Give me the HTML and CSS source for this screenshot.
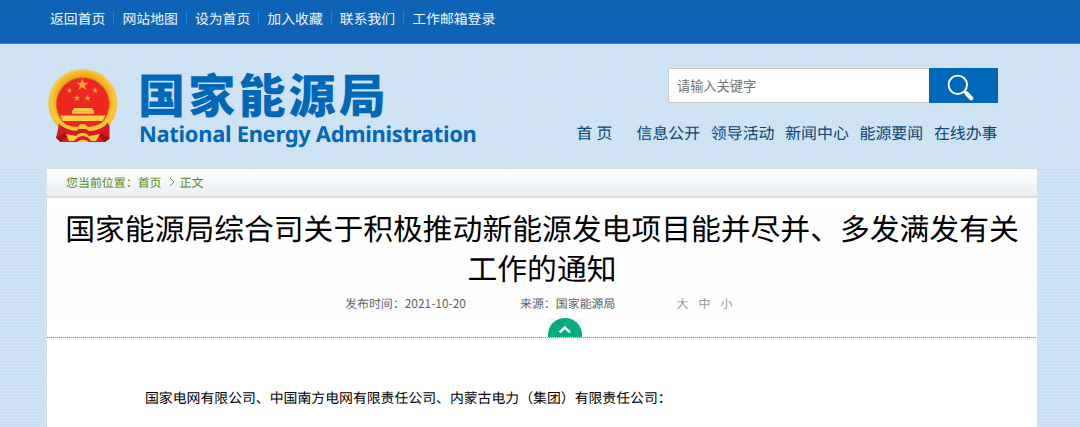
FILE: index.html
```html
<!DOCTYPE html>
<html lang="zh-CN">
<head>
	<meta charset="utf-8">
	<meta name="viewport" content="width=device-width, initial-scale=1">
	<title>国家能源局综合司关于积极推动新能源发电项目能并尽并、多发满发有关工作的通知</title>
	<link rel="stylesheet" href="styles.css">
</head>
<body>
<nav class="topbar">
	<a href="#">返回首页</a>
	<a href="#">网站地图</a>
	<a href="#">设为首页</a>
	<a href="#">加入收藏</a>
	<a href="#">联系我们</a>
	<a href="#">工作邮箱登录</a>
</nav>

<header class="header">
	<a class="logo" href="#">
		<svg class="emblem" viewBox="0 0 70 76" width="70" height="76">
			<defs>
				<radialGradient id="gold" cx="0.5" cy="0.47" r="0.54">
					<stop offset="0.7" stop-color="#f0a91c"></stop>
					<stop offset="0.86" stop-color="#fbcb3c"></stop>
					<stop offset="1" stop-color="#eeb02b"></stop>
				</radialGradient>
				<path id="star" d="M 0 -10 L 2.3 -3.1 L 9.5 -3.1 L 3.7 1.2 L 5.9 8.1 L 0 3.9 L -5.9 8.1 L -3.7 1.2 L -9.5 -3.1 L -2.3 -3.1 Z"></path>
			</defs>
			<!-- wreath -->
			<ellipse cx="34.8" cy="34.2" rx="34.5" ry="34.2" fill="url(#gold)"></ellipse>
			<circle cx="34.8" cy="35" r="27" fill="#c88619"></circle>
			<circle cx="34.8" cy="35.2" r="26.2" fill="#ed2722"></circle>
			<!-- stars -->
			<g fill="#e9a52f">
				<use href="#star" transform="translate(34.3 15.8) scale(0.65)"></use>
				<use href="#star" transform="translate(21.4 21.4) scale(0.33)"></use>
				<use href="#star" transform="translate(47.2 21.4) scale(0.33)"></use>
				<use href="#star" transform="translate(29 29.2) scale(0.35)"></use>
				<use href="#star" transform="translate(39.6 29.2) scale(0.35)"></use>
			</g>
			<!-- gate -->
			<path fill="#fccf45" d="M 25.5 39 h 19 v 2.2 h 1.5 v 3.6 h -22 v -3.6 h 1.5 z M 12 46.5 h 45.6 l -3 5.5 h -39.6 z"></path>
			<path stroke="#d99024" stroke-width="0.6" d="M 24 42.8 h 22"></path>
			<!-- ribbons -->
			<path fill="#d91a20" d="M 11 53 Q 22 58 29 60 L 41 60 Q 50 58 59 53 L 61.5 57 V 70 L 57 73 H 12.5 L 8 69 L 10 60 Z"></path>
			<path fill="#a90f18" d="M 8 68 L 17 64 L 20 67 L 12.5 73 Z M 61.5 69 L 53 64 L 50 67 L 57 73 Z"></path>
			<path fill="#f9c838" d="M 8 49 Q 18 58 30 58 Q 31 55 34.8 55 Q 38 55 40 58 Q 52 57 62 49 L 58 56 Q 50 62 41 62 L 38 60 H 31 L 28 62 Q 18 61 11 55 Z"></path>
			<path fill="#fccb3b" d="M 18 65 L 28 67 Q 30 64 34.8 64 Q 39 64 41 67 L 52 65 L 48 72 H 21 Z"></path>
			<path fill="#d91a20" d="M 25 73 Q 30 67 34.8 67 Q 40 67 44 73 Z"></path>
			<path fill="#fccb3b" d="M 29 73 Q 35 68 41 73 Z"></path>
		</svg>
		<span class="logo-text">
			<span class="logo-cn">国家能源局</span>
			<span class="logo-en">National Energy Administration</span>
		</span>
	</a>
	<div class="header-right">
		<form class="search">
			<input type="text" placeholder="请输入关键字">
			<button type="button" aria-label="搜索">
				<svg viewBox="0 0 28 28" width="28" height="28" fill="none" stroke="#fff">
					<circle cx="10.8" cy="10.8" r="9.2" stroke-width="1.9"></circle>
					<path d="M 17.2 17.2 l 2.6 2.6" stroke-width="2"></path>
					<path d="M 19.6 19.6 l 4.6 4.6" stroke-width="4.2" stroke-linecap="round"></path>
				</svg>
			</button>
		</form>
		<nav class="menu">
			<a class="home" href="#">首 页</a>
			<a href="#">信息公开</a>
			<a href="#">领导活动</a>
			<a href="#">新闻中心</a>
			<a href="#">能源要闻</a>
			<a href="#">在线办事</a>
		</nav>
	</div>
</header>

<main class="content">
	<div class="crumbs">
		<span>您当前位置：</span><a href="#">首页</a>
		<svg viewBox="0 0 6 10" width="6" height="10"><path d="M 1 1 L 5 5 L 1 9" fill="none" stroke="#6a9a2c"></path></svg>
		<a href="#">正文</a>
	</div>
	<div class="title-box">
		<h1>国家能源局综合司关于积极推动新能源发电项目能并尽并、多发满发有关<br>工作的通知</h1>
		<div class="info">
			<span class="date">发布时间：2021-10-20</span>
			<span class="source">来源：国家能源局</span>
			<span class="sizes"><a href="#">大</a><a href="#">中</a><a href="#">小</a></span>
		</div>
		<!-- collapse handle, sits on the dotted line -->
		<svg class="toggle" viewBox="0 0 34 19" width="34" height="19">
			<path fill="#05ac81" d="M 0 19 V 16.5 A 17 16.5 0 0 1 34 16.5 V 19 Z"></path>
			<path fill="none" stroke="#f4fffb" stroke-width="2.6" d="M 11.7 14.4 L 16.8 9.5 L 21.9 14.4"></path>
		</svg>
	</div>
	<div class="dots"></div>
	<article class="article">
		<p>国家电网有限公司、中国南方电网有限责任公司、内蒙古电力（集团）有限责任公司：</p>
	</article>
</main>
</body>
</html>
```

FILE: styles.css
```css
* {
  box-sizing: border-box;
  padding: 0;
  margin: 0;
}
body {
  height: 427px;
  overflow: hidden;
  font-family: "Noto Sans CJK SC", sans-serif;
  font-size: 12px;
  text-rendering: geometricPrecision;
  /* faint woven grid */
  background-color: #c8dff3;
  background-image:
    repeating-linear-gradient(90deg, rgba(255, 255, 255, 0.13) 0 1px, transparent 1px 3px),
    repeating-linear-gradient(rgba(255, 255, 255, 0.13) 0 1px, transparent 1px 3px);
}
a {
  color: inherit;
  text-decoration: none;
}

/* top bar */
.topbar {
  height: 44px;
  padding: 11px 0 0 50px;
  display: flex;
  align-items: flex-start;
  background: #0e63b6;
  border-bottom: 1px solid #3f86cb;
  color: #eef5fc;
  font-size: 13.87px;
  line-height: 14px;
}
.topbar a + a {
  margin-left: 8px;
  padding-left: 8px;
  border-left: 1px solid #0a88e4;
}

/* header */
.header {
  height: 124px;
  padding: 0 82px 0 48px;
  display: flex;
  justify-content: space-between;
  background: rgba(211, 228, 243, 0.4);
}
.logo {
  display: flex;
  padding-top: 25px;
  color: #0168b9;
}
.emblem {
  display: block;
}
.logo-text {
  display: flex;
  flex-direction: column;
  padding-left: 20px;
}
.logo-cn {
  margin-top: -3px;
  font-size: 47px;
  font-weight: 900;
  line-height: 54px;
  letter-spacing: 3.2px;
}
.logo-en {
  margin-top: 2px;
  padding-left: 1px;
  font-family: "Noto Sans", "Open Sans", sans-serif;
  font-size: 21.9px;
  font-weight: 700;
  line-height: 26px;
  letter-spacing: -0.28px;
  white-space: nowrap;
}
.header-right {
  padding-top: 24px;
  display: flex;
  flex-direction: column;
  align-items: flex-end;
}
.search {
  display: flex;
  height: 35px;
}
.search input {
  width: 261px;
  height: 35px;
  padding: 0 8px;
  border: 1px solid #ccc;
  border-right: 0;
  background: #fff;
  font-family: inherit;
  font-size: 13.2px;
  outline: 0;
}
.search input::placeholder {
  color: #757575;
}
.search button {
  width: 69px;
  height: 35px;
  padding: 4px 0 0 18px;
  border: 0;
  background: #0168b9;
}
.search button svg {
  display: block;
}
.menu {
  display: flex;
  gap: 10.8px;
  margin: 19px 0.5px 0 0;
  color: #0e4577;
  font-size: 15.9px;
  line-height: 22px;
}
.menu .home {
  margin-right: 13px;
  letter-spacing: 0.3px;
}

/* article */
.content {
  width: 992px;
  margin-left: 46px;
  background: #fff;
  border: 1px solid #d9dde0;
  border-bottom: 0;
}
.crumbs {
  height: 29px;
  padding: 0 0 1px 19px;
  display: flex;
  align-items: center;
  border-bottom: 2px solid #dadcde;
  background: linear-gradient(#fff, #eaeff3);
  color: #558b0c;
  font-size: 11.95px;
}
.crumbs svg {
  margin: 0 5px 0 7px;
}
.title-box {
  height: 139px;
  padding-top: 10px;
  display: flex;
  flex-direction: column;
  align-items: center;
  background: linear-gradient(#fff, #fdfdfd 110px, #fff 119px);
}
.title-box h1 {
  color: #000;
  font-size: 29.8px;
  font-weight: 400;
  line-height: 39.5px;
  text-align: center;
  white-space: nowrap;
}
.info {
  width: 100%;
  height: 31px;
  padding: 2px 0 0 298px;
  display: flex;
  color: #666;
  font-size: 11.95px;
  line-height: 30px;
}
.source {
  margin-left: 54px;
}
.sizes {
  display: flex;
  gap: 10px;
  margin-left: 61px;
  color: #999;
}
.toggle {
  display: block;
  flex: none;
  margin-left: 45px;
  background: #f5f7f7;
}
.dots {
  height: 1px;
  background: repeating-linear-gradient(90deg, #2cb993 0 1px, #c9eee3 1px 2px);
}
.article {
  height: 100px;
  padding: 47px 98px 0;
  color: #000;
  font-size: 13.87px;
  line-height: 24px;
}
```
